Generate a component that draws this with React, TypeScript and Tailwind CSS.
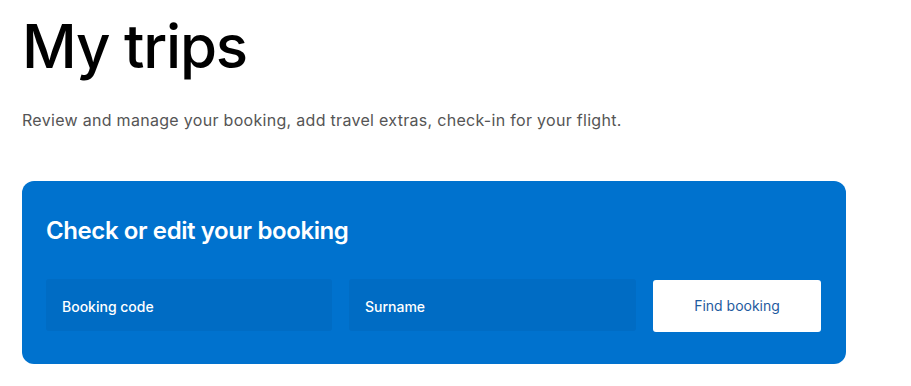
export default function App() {
  return (
    <div className="w-[911px] h-[386px] bg-white overflow-hidden" style={{ fontFamily: 'Inter, "Noto Sans", sans-serif' }}>
      <div className="pl-[22px] pt-[8px]">
        <h1 className="text-[60px] leading-[76px] font-[450] tracking-[-1.2px] text-black">My trips</h1>
        <p className="mt-[24px] text-[16px] leading-[24px] tracking-[0.3px] text-[#555]">Review and manage your booking, add travel extras, check-in for your flight.</p>
        <div className="mt-[49px] w-[824px] h-[183px] rounded-[12px] bg-[#0072ce] pl-[24px] pr-[25px] pt-[34px]">
          <h2 className="text-[24px] leading-[32px] font-semibold text-white tracking-[-0.4px]">Check or edit your booking</h2>
          <div className="mt-[32px] flex gap-[17px]">
            <div className="w-[286px] h-[52px] rounded-[3px] bg-[#006cc4] flex items-center pl-[16px] pt-[2px] text-[14px] font-medium text-white">Booking code</div>
            <div className="w-[287px] h-[52px] rounded-[3px] bg-[#006cc4] flex items-center pl-[16px] pt-[2px] text-[14px] font-medium text-white">Surname</div>
            <button className="w-[168px] h-[52px] mt-[1px] rounded-[3px] bg-white text-[14px] text-[#1f5ba0] pb-[2px]">Find booking</button>
          </div>
        </div>
      </div>
    </div>
  );
}
